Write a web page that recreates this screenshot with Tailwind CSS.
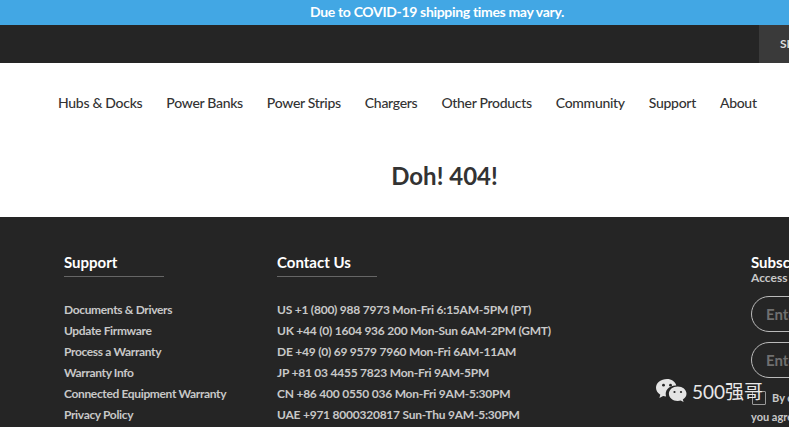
<!DOCTYPE html>
<html lang="en">
<head>
    <meta charset="UTF-8">
    <title>Doh! 404!</title>
    <script src="https://cdn.jsdelivr.net/npm/@tailwindcss/browser@4"></script>
</head>
<body class="relative h-[427px] w-[789px] overflow-hidden bg-[#252525] font-['Lato','Noto_Sans_CJK_SC',sans-serif]">
    <!-- banner -->
    <div class="flex h-[25px] items-center justify-center bg-[#42a7e4] pb-[2px] pl-[85px] text-[14px] font-bold tracking-[-0.33px] text-white">Due to COVID-19 shipping times may vary.</div>

    <!-- top bar -->
    <div class="flex h-[38px] justify-end bg-[#252525]">
        <div class="flex w-[30px] items-center overflow-hidden whitespace-nowrap bg-[#3a3a3a] pl-[21px] text-[12px] font-bold text-[#ddd]">SIGN IN</div>
    </div>

    <!-- nav + heading -->
    <div class="h-[154px] bg-white">
        <nav class="flex gap-[24px] whitespace-nowrap pl-[58px] pt-[31px] text-[14px] leading-[18px] font-medium tracking-[-0.3px] text-[#333]">
            <a>Hubs &amp; Docks</a>
            <a>Power Banks</a>
            <a>Power Strips</a>
            <a>Chargers</a>
            <a>Other Products</a>
            <a>Community</a>
            <a>Support</a>
            <a>About</a>
        </nav>
        <h1 class="mt-[47px] pl-[100px] text-center text-[24px] leading-[34px] font-bold text-[#333]">Doh! 404!</h1>
    </div>

    <!-- footer -->
    <footer class="flex pl-[64px] pt-[35px]">
        <div class="w-[213px] shrink-0">
            <h3 class="w-[100px] border-b border-[#666] pb-[3px] text-[15px] leading-[21px] font-bold text-white">Support</h3>
            <ul class="mt-[22px] text-[12px] leading-[21px] font-bold tracking-[-0.35px] text-[#c8c8c8]">
                <li>Documents &amp; Drivers</li>
                <li>Update Firmware</li>
                <li>Process a Warranty</li>
                <li>Warranty Info</li>
                <li>Connected Equipment Warranty</li>
                <li>Privacy Policy</li>
            </ul>
        </div>
        <div class="w-[474px] shrink-0">
            <h3 class="w-[100px] border-b border-[#666] pb-[3px] text-[15px] leading-[21px] font-bold text-white">Contact Us</h3>
            <ul class="mt-[22px] text-[12px] leading-[21px] font-bold tracking-[-0.23px] text-[#c8c8c8]">
                <li>US +1 (800) 988 7973 Mon-Fri 6:15AM-5PM (PT)</li>
                <li>UK +44 (0) 1604 936 200 Mon-Sun 6AM-2PM (GMT)</li>
                <li>DE +49 (0) 69 9579 7960 Mon-Fri 6AM-11AM</li>
                <li>JP +81 03 4455 7823 Mon-Fri 9AM-5PM</li>
                <li>CN +86 400 0550 036 Mon-Fri 9AM-5:30PM</li>
                <li>UAE +971 8000320817 Sun-Thu 9AM-5:30PM</li>
            </ul>
        </div>
        <div class="w-[300px] shrink-0">
            <h3 class="text-[15px] leading-[21px] font-bold whitespace-nowrap text-white">Subscribe</h3>
            <p class="text-[12px] leading-[10px] font-bold whitespace-nowrap text-[#c8c8c8]">Access exclusive deals</p>
            <div class="mt-[13px] flex h-[36px] w-[260px] items-center rounded-full border border-[#bbb] pl-[14px] text-[15px] font-bold text-[#707070]">Enter your name</div>
            <div class="mt-[10px] flex h-[36px] w-[260px] items-center rounded-full border border-[#bbb] pl-[14px] text-[15px] font-bold text-[#707070]">Enter your email</div>
            <div class="mt-[12px] flex items-center gap-[6px] whitespace-nowrap text-[11px] font-bold text-[#c8c8c8]">
                <span class="ml-[1px] h-[14px] w-[14px] rounded-[1px] border border-[#999]"></span>
                <span>By checking this box</span>
            </div>
            <p class="mt-[3px] text-[11px] leading-[14px] font-bold whitespace-nowrap text-[#c8c8c8]">you agree to our terms</p>
        </div>
    </footer>

    <!-- watermark -->
    <div class="absolute left-[656px] top-[379px] flex items-center gap-[5px]">
        <svg width="31" height="26" viewBox="0 0 31 26" fill="#e4e4e4">
            <path d="M11 0C5 0 0 3.800 0 8.700c0 2.900 1.700 5.300 4.300 7l-.9 3.300 3.700-2c1 .3 1.900.4 3 .5-.3-.9-.4-1.800-.4-2.700 0-4.700 4.300-8.400 9.700-8.400h.9C19.200 2.700 15.500 0 11 0z"/>
            <path d="M21.700 7.500c-5 0-8.800 3.200-8.800 7.200s3.800 7.200 8.800 7.200c1 0 2-.2 3-.4l2.900 1.600-.8-2.700c2.300-1.400 3.700-3.400 3.700-5.700 0-4-3.900-7.200-8.800-7.200z"/>
            <circle cx="7.500" cy="6.200" r="1.400" fill="#252525"/>
            <circle cx="14.500" cy="6.200" r="1.400" fill="#252525"/>
            <circle cx="18.500" cy="13" r="1.100" fill="#252525"/>
            <circle cx="25" cy="13" r="1.100" fill="#252525"/>
        </svg>
        <span class="text-[19px] leading-[20px] text-[#e8e8e8]">500强哥</span>
    </div>
</body>
</html>
